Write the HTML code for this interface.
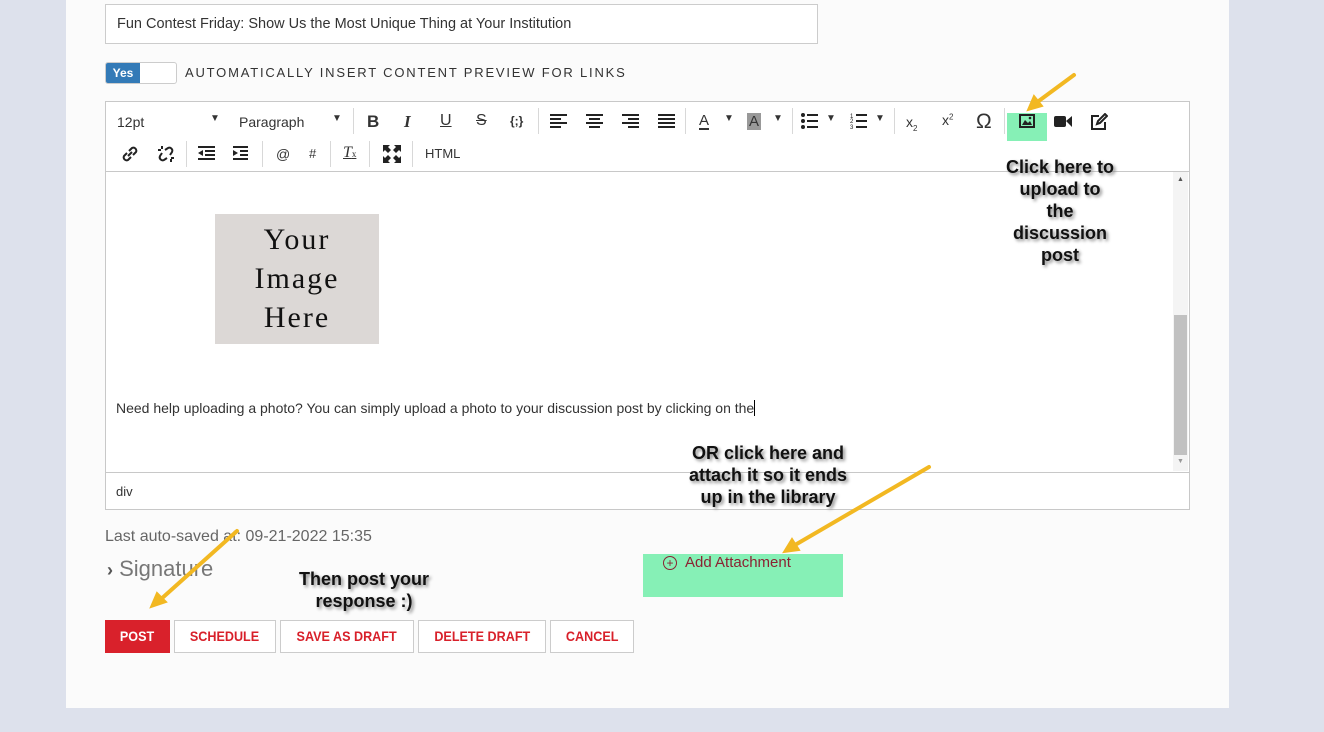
<!DOCTYPE html>
<html><head><style>
body{margin:0;width:1324px;height:732px;background:#dde1ec;position:relative;overflow:hidden;font-family:"Liberation Sans",sans-serif}
.a{position:absolute}
#panel{left:66px;top:0;width:1163px;height:708px;background:#fbfbfb}
.tb{font-size:14px;color:#333}
.sep{position:absolute;width:1px;height:26px;background:#d8d8d8}
.ann{font-weight:bold;font-size:18px;color:#111;text-align:center;line-height:22px;text-shadow:2px 2px 3px #888}
.btn{position:absolute;top:620px;height:33px;box-sizing:border-box;border:1px solid #ccc;background:#fff;color:#d8202a;font-weight:bold;font-size:14px;line-height:31px;text-align:center;font-family:"Liberation Sans Narrow","Liberation Sans",sans-serif}
.btn span{display:inline-block;transform:scaleX(0.9)}
</style></head><body>
<div id="panel" class="a"></div>
<div class="a" style="left:105px;top:4px;width:711px;height:38px;border:1px solid #ccc;background:#fff;font-size:14.5px;line-height:38px;text-indent:11px;color:#333">Fun Contest Friday: Show Us the Most Unique Thing at Your Institution</div>
<div class="a" style="left:105px;top:62px;width:70px;height:20px;border:1px solid #ccc;border-radius:3px;background:#fff"></div>
<div class="a" style="left:106px;top:63px;width:34px;height:20px;background:#337ab7;color:#fff;font-size:12px;font-weight:bold;line-height:20px;text-align:center;border-radius:2px 0 0 2px">Yes</div>
<div class="a" style="left:185px;top:65px;font-size:13px;letter-spacing:1.8px;color:#333">AUTOMATICALLY INSERT CONTENT PREVIEW FOR LINKS</div>

<div class="a" style="left:105px;top:101px;width:1083px;height:407px;border:1px solid #c8c8c8;background:#fff"></div>
<div class="a" style="left:106px;top:171px;width:1083px;height:1px;background:#c8c8c8"></div>
<div class="a" style="left:106px;top:472px;width:1083px;height:1px;background:#c8c8c8"></div>
<div class="a tb" style="left:117px;top:114px">12pt</div>
<div class="a tb" style="left:210px;top:113px;font-size:10px">▼</div>
<div class="a tb" style="left:239px;top:114px">Paragraph</div>
<div class="a tb" style="left:332px;top:113px;font-size:10px">▼</div>
<div class="sep" style="left:353px;top:108px"></div>
<div class="a tb" style="left:367px;top:112px;font-size:17px;font-weight:bold">B</div>
<div class="a tb" style="left:404px;top:112px;font-size:17px;font-style:italic;font-weight:bold;font-family:'Liberation Serif'">I</div>
<div class="a tb" style="left:440px;top:112px;font-size:16px;text-decoration:underline">U</div>
<div class="a tb" style="left:476px;top:112px;font-size:16px;text-decoration:line-through">S</div>
<div class="a tb" style="left:510px;top:114px;font-size:12px;font-weight:bold">{;}</div>
<div class="sep" style="left:538px;top:108px"></div>
<svg class="a" style="left:550px;top:114px" width="130" height="16" fill="#222">
<rect x="0" y="0" width="17" height="2"/><rect x="0" y="4" width="11" height="2"/><rect x="0" y="8" width="17" height="2"/><rect x="0" y="12" width="11" height="2"/>
<rect x="36" y="0" width="17" height="2"/><rect x="39" y="4" width="11" height="2"/><rect x="36" y="8" width="17" height="2"/><rect x="39" y="12" width="11" height="2"/>
<rect x="72" y="0" width="17" height="2"/><rect x="78" y="4" width="11" height="2"/><rect x="72" y="8" width="17" height="2"/><rect x="78" y="12" width="11" height="2"/>
<rect x="108" y="0" width="17" height="2"/><rect x="108" y="4" width="17" height="2"/><rect x="108" y="8" width="17" height="2"/><rect x="108" y="12" width="17" height="2"/>
</svg>
<div class="sep" style="left:685px;top:108px"></div>
<div class="a tb" style="left:699px;top:113px;font-size:15px;border-bottom:2px solid #333;line-height:15px">A</div>
<div class="a tb" style="left:724px;top:113px;font-size:10px">▼</div>
<div class="a tb" style="left:747px;top:113px;font-size:15px;background:#999;line-height:17px;padding:0 2px">A</div>
<div class="a tb" style="left:773px;top:113px;font-size:10px">▼</div>
<div class="sep" style="left:792px;top:108px"></div>
<svg class="a" style="left:801px;top:113px" width="20" height="16" fill="#222"><circle cx="2" cy="2" r="2"/><circle cx="2" cy="8" r="2"/><circle cx="2" cy="14" r="2"/><rect x="6" y="1" width="11" height="2"/><rect x="6" y="7" width="11" height="2"/><rect x="6" y="13" width="11" height="2"/></svg>
<div class="a tb" style="left:826px;top:113px;font-size:10px">▼</div>
<svg class="a" style="left:850px;top:113px" width="20" height="16" fill="#222"><text x="0" y="5" font-size="6">1</text><text x="0" y="10" font-size="6">2</text><text x="0" y="16" font-size="6">3</text><rect x="6" y="1" width="11" height="2"/><rect x="6" y="7" width="11" height="2"/><rect x="6" y="13" width="11" height="2"/></svg>
<div class="a tb" style="left:875px;top:113px;font-size:10px">▼</div>
<div class="sep" style="left:894px;top:108px"></div>
<div class="a tb" style="left:906px;top:114px;font-size:14px">x<sub style="font-size:8px">2</sub></div>
<div class="a tb" style="left:942px;top:112px;font-size:14px">x<sup style="font-size:8px">2</sup></div>
<div class="a tb" style="left:976px;top:110px;font-size:21px">Ω</div>
<div class="sep" style="left:1004px;top:108px"></div>
<div class="a" style="left:1007px;top:113px;width:40px;height:28px;background:#86f0b6"></div>
<svg class="a" style="left:1019px;top:114px" width="16" height="14"><rect x="1" y="1" width="14" height="12" fill="none" stroke="#222" stroke-width="2"/><path d="M3 11 L6 6 L9 9 L11 7 L13 11Z" fill="#222"/><circle cx="11" cy="4" r="1.3" fill="#222"/></svg>
<svg class="a" style="left:1054px;top:115px" width="19" height="13" fill="#222"><rect x="0" y="1" width="12" height="11" rx="2"/><path d="M12 6 L18 1 V12Z"/></svg>
<svg class="a" style="left:1090px;top:113px" width="18" height="18" fill="none" stroke="#222" stroke-width="2"><path d="M9 3 H2 V16 H15 V9"/><path d="M7 11 L8 8 L15 1 L17 3 L10 10Z"/></svg>
<svg class="a" style="left:121px;top:145px" width="18" height="18" fill="none" stroke="#222" stroke-width="2"><path d="M8 6 L11 3 a3 3 0 0 1 4 4 L12 10 M10 12 L7 15 a3 3 0 0 1 -4 -4 L6 8 M7 11 L11 7"/></svg>
<svg class="a" style="left:157px;top:145px" width="18" height="18" fill="none" stroke="#222" stroke-width="2"><path d="M8 5 L11 3 a3 3 0 0 1 4 4 L13 10 M10 13 L7 15 a3 3 0 0 1 -4 -4 L5 8 M1 5 h3 M5 1 v3 M14 17 v-3 M17 13 h-3"/></svg>
<div class="sep" style="left:186px;top:141px"></div>
<svg class="a" style="left:198px;top:146px" width="50" height="15" fill="#222"><rect x="0" y="0" width="17" height="2"/><rect x="7" y="4" width="10" height="2"/><rect x="7" y="8" width="10" height="2"/><rect x="0" y="12" width="17" height="2"/><path d="M0 7 L5 4 V10Z"/>
<rect x="35" y="0" width="17" height="2"/><rect x="42" y="4" width="10" height="2"/><rect x="42" y="8" width="10" height="2"/><rect x="35" y="12" width="17" height="2"/><path d="M40 7 L35 4 V10Z"/></svg>
<div class="sep" style="left:262px;top:141px"></div>
<div class="a tb" style="left:276px;top:146px">@</div>
<div class="a tb" style="left:309px;top:146px;font-size:13px">#</div>
<div class="sep" style="left:330px;top:141px"></div>
<div class="a tb" style="left:343px;top:144px;font-size:16px;font-style:italic;text-decoration:underline;font-family:'Liberation Serif'">T<span style="font-size:9px;font-style:normal">x</span></div>
<div class="sep" style="left:369px;top:141px"></div>
<svg class="a" style="left:383px;top:145px" width="18" height="18" fill="#222"><path d="M0 0 H7 L5 2 L8 5 L5 8 L2 5 L0 7Z M18 0 V7 L16 5 L13 8 L10 5 L13 2 L11 0Z M0 18 V11 L2 13 L5 10 L8 13 L5 16 L7 18Z M18 18 H11 L13 16 L10 13 L13 10 L16 13 L18 11Z"/></svg>
<div class="sep" style="left:412px;top:141px"></div>
<div class="a tb" style="left:425px;top:146px;font-size:13px">HTML</div>

<div class="a" style="left:215px;top:214px;width:164px;height:130px;background:#dcd8d6;font-family:'Liberation Serif',serif;font-size:30px;letter-spacing:2px;text-align:center;line-height:39px;color:#111;padding-top:6px;box-sizing:border-box">Your<br>Image<br>Here</div>
<div class="a" style="left:116px;top:400px;font-size:14px;color:#333">Need help uploading a photo? You can simply upload a photo to your discussion post by clicking on the <span style="border-left:1px solid #000"></span></div>
<div class="a" style="left:1173px;top:172px;width:15px;height:299px;background:#f4f4f4"></div>
<div class="a" style="left:1174px;top:315px;width:13px;height:140px;background:#c1c1c1"></div>
<div class="a" style="left:1177px;top:176px;font-size:7px;color:#555">▲</div>
<div class="a" style="left:1177px;top:458px;font-size:7px;color:#999">▼</div>
<div class="a" style="left:116px;top:484px;font-size:13px;color:#333">div</div>

<div class="a" style="left:105px;top:528px;font-size:16px;color:#666">Last auto-saved at: 09-21-2022 15:35</div>
<div class="a" style="left:107px;top:556px;font-size:22px;color:#777"><b style="color:#555;font-size:18px">›</b> Signature</div>
<div class="a" style="left:643px;top:554px;width:200px;height:43px;background:#86f0b6"></div>
<div class="a" style="left:663px;top:554px;font-size:15px;color:#8b2232"><span style="display:inline-block;width:12px;height:12px;border:1px solid #8b2232;border-radius:50%;font-size:12px;line-height:12px;text-align:center;margin-right:8px">+</span>Add Attachment</div>

<div class="btn" style="left:105px;width:65px;background:#d9212b;border-color:#d9212b;color:#fff"><span>POST</span></div>
<div class="btn" style="left:174px;width:102px"><span>SCHEDULE</span></div>
<div class="btn" style="left:280px;width:134px"><span>SAVE AS DRAFT</span></div>
<div class="btn" style="left:418px;width:128px"><span>DELETE DRAFT</span></div>
<div class="btn" style="left:550px;width:84px"><span>CANCEL</span></div>

<div class="a ann" style="left:990px;top:156px;width:140px">Click here to<br>upload to<br>the<br>discussion<br>post</div>
<div class="a ann" style="left:668px;top:442px;width:200px">OR click here and<br>attach it so it ends<br>up in the library</div>
<div class="a ann" style="left:274px;top:568px;width:180px">Then post your<br>response :)</div>

<svg class="a" style="left:0;top:0" width="1324" height="732" fill="none" stroke="#f2b822" stroke-width="4" stroke-linecap="round">
<path d="M1074 75 L1036 103"/><path d="M1028 110 L1034 96 L1042 106Z" fill="#f2b822" stroke-width="2"/>
<path d="M237 531 L160 600"/><path d="M151 607 L157 593 L166 602Z" fill="#f2b822" stroke-width="2"/>
<path d="M929 467 L795 545"/><path d="M784 552 L792 539 L799 550Z" fill="#f2b822" stroke-width="2"/>
</svg>
</body></html>
